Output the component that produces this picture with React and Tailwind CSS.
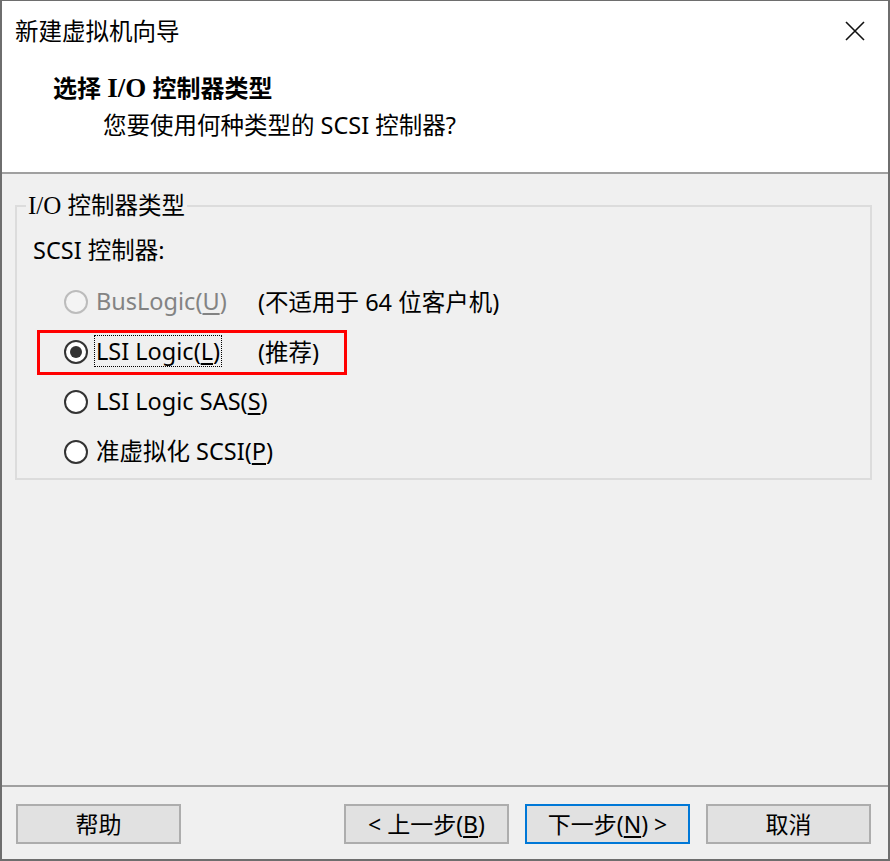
import React from "react";

const font = { fontFamily: '"Noto Sans", "Noto Sans CJK SC", sans-serif' };

function Radio({ checked, disabled }) {
  return (
    <span
      className={
        "flex h-[24px] w-[24px] shrink-0 items-center justify-center rounded-full border-2 " +
        (disabled ? "border-[#bcbcbc] bg-[#f4f4f4]" : "border-[#333333] bg-white")
      }
    >
      {checked && <span className="h-[12px] w-[12px] rounded-full bg-[#333333]" />}
    </span>
  );
}

function Row({ checked, disabled, focus, label, mnemonic, after, note, children }) {
  return (
    <div className="relative flex h-[50px] items-center whitespace-nowrap">
      {children}
      <span className="ml-[31px]">
        <Radio checked={checked} disabled={disabled} />
      </span>
      <div className="ml-[8px] w-[162px] shrink-0 whitespace-nowrap">
        <span
          className={
            "inline-block whitespace-nowrap leading-[30px] " +
            (focus ? "-ml-[2px] border border-dotted border-black pl-[1px] pr-[1px]" : "") +
            (disabled ? " text-[#838383]" : " text-black")
          }
        >
          {label}(<u className="underline-offset-[3px]">{mnemonic}</u>){after}
        </span>
      </div>
      {note && <span className="whitespace-nowrap leading-[30px] text-black">{note}</span>}
    </div>
  );
}

function Btn({ children, primary, className = "" }) {
  return (
    <button
      className={
        "flex h-[40px] w-[165px] items-center justify-center whitespace-nowrap border-2 bg-[#e1e1e1] text-[23px] text-black " +
        (primary ? "border-[#0078d7]" : "border-[#adadad]") +
        " " +
        className
      }
    >
      {children}
    </button>
  );
}

export default function App() {
  return (
    <div
      style={font}
      className="flex h-[861px] w-[890px] flex-col border-b-2 border-l-2 border-r-2 border-t border-[#6e6e6e] bg-[#f0f0f0] text-[23.5px] text-black"
    >
      {/* Header */}
      <div className="h-[173px] shrink-0 border-b-2 border-[#a0a0a0] bg-white">
        <div className="mt-[15px] flex h-[30px] items-center justify-between pl-[13px] pr-[23px]">
          <span className="leading-[30px]">新建虚拟机向导</span>
          <svg width="20" height="20" viewBox="0 0 20 20">
            <path d="M1 1 L19 19 M19 1 L1 19" stroke="#111" strokeWidth="1.6" fill="none" />
          </svg>
        </div>
        <div className="mt-[27px] whitespace-nowrap pl-[51px] text-[24px] font-bold leading-[30px]">
          选择{" "}
          <span style={{ fontFamily: '"Liberation Serif", serif' }} className="text-[27px]">
            I/O
          </span>{" "}
          控制器类型
        </div>
        <div className="mt-[7px] whitespace-nowrap pl-[101px] leading-[30px]">您要使用何种类型的 SCSI 控制器?</div>
      </div>

      {/* Content */}
      <div className="flex-1 pl-[13px] pr-[16px]">
        <fieldset className="mt-[16px] border-2 border-[#dcdcdc] pb-[1px]">
          <legend className="ml-[9px] px-[2px] leading-[30px]">
            <span style={{ fontFamily: '"Liberation Serif", serif' }} className="text-[25px]">
              I/O
            </span>{" "}
            控制器类型
          </legend>
          <div className="pl-[16px] pt-[14px]">
            <div className="leading-[30px]">SCSI 控制器:</div>
            <div className="mt-[12px] flex flex-col">
              <Row disabled label="BusLogic" mnemonic="U" note="(不适用于 64 位客户机)" />
              <Row checked focus label="LSI Logic" mnemonic="L" note="(推荐)">
                <div className="pointer-events-none absolute left-[4px] top-[3px] h-[45px] w-[310px] border-[3px] border-[#ff0000]" />
              </Row>
              <Row label="LSI Logic SAS" mnemonic="S" />
              <Row label="准虚拟化 SCSI" mnemonic="P" />
            </div>
          </div>
        </fieldset>
      </div>

      {/* Footer */}
      <div className="flex h-[74px] shrink-0 items-start border-t-2 border-[#a0a0a0] pl-[14px] pr-[17px] pt-[17px]">
        <Btn>帮助</Btn>
        <div className="flex-1" />
        <Btn>
          &lt; 上一步(<u className="underline-offset-[3px]">B</u>)
        </Btn>
        <Btn primary className="ml-[16px]">
          下一步(<u className="underline-offset-[3px]">N</u>) &gt;
        </Btn>
        <Btn className="ml-[16px]">取消</Btn>
      </div>
    </div>
  );
}
